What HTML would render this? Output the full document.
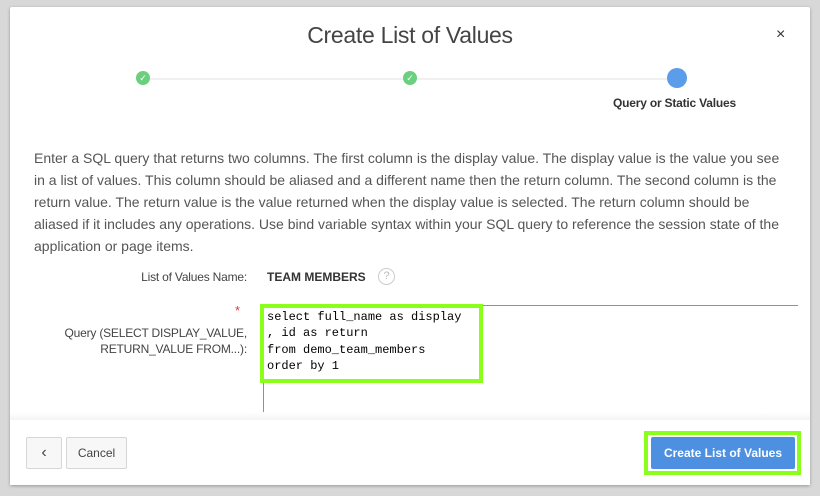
<!DOCTYPE html>
<html><head><style>
*{margin:0;padding:0;box-sizing:border-box}
body{width:820px;height:496px;background:#d8d8d8;font-family:"Liberation Sans",sans-serif;position:relative;overflow:hidden}
.dlg{position:absolute;left:10px;top:7px;width:800px;height:478px;background:#fff;border-radius:2px;box-shadow:0 1px 3px rgba(0,0,0,.3)}
.title{position:absolute;left:0;width:820px;top:22px;text-align:center;font-size:23px;color:#444;letter-spacing:-0.3px}
.x{position:absolute;left:776px;top:26px;font-size:16px;color:#333}
.line{position:absolute;top:78px;height:2px;background:#f0f0f0}
.dot{position:absolute;width:14px;height:14px;border-radius:50%;background:#6ccf7f;top:71px;color:#fff;font-size:9px;text-align:center;line-height:14px}
.blue{position:absolute;left:667px;top:68px;width:20px;height:20px;border-radius:50%;background:#5b9de8}
.step{position:absolute;left:613px;top:96px;font-size:12px;font-weight:bold;color:#333;letter-spacing:-0.2px}
.desc{position:absolute;left:34px;top:147px;width:760px;font-size:14px;line-height:22px;color:#555}
.lbl{position:absolute;font-size:12px;color:#444;text-align:right;letter-spacing:-0.2px}
.code{position:absolute;left:267px;top:309px;font-family:"Liberation Mono",monospace;font-size:12px;line-height:16.3px;color:#000}
.gbox{position:absolute;border:4px solid #8aff1c}
.footer{position:absolute;left:10px;top:420px;width:800px;height:65px;background:#fff}
.btn{position:absolute;border:1px solid #d6d6d6;border-radius:2px;background:#f7f7f7;color:#444;font-size:12px;text-align:center}
</style></head><body>
<div class="dlg"></div>
<div class="title">Create List of Values</div>
<div class="x">×</div>
<div class="line" style="left:150px;width:520px"></div>
<div class="dot" style="left:136px">✓</div>
<div class="dot" style="left:403px">✓</div>
<div class="blue"></div>
<div class="step">Query or Static Values</div>
<div class="desc">Enter a SQL query that returns two columns. The first column is the display value. The display value is the value you see in a list of values. This column should be aliased and a different name then the return column. The second column is the return value. The return value is the value returned when the display value is selected. The return column should be aliased if it includes any operations. Use bind variable syntax within your SQL query to reference the session state of the application or page items.</div>
<div class="lbl" style="left:60px;width:187px;top:270px">List of Values Name:</div>
<div style="position:absolute;left:267px;top:270px;font-size:12px;font-weight:bold;color:#333">TEAM MEMBERS</div>
<div style="position:absolute;left:378px;top:268px;width:17px;height:17px;border:1px solid #ccc;border-radius:50%;font-size:11px;color:#bbb;text-align:center;line-height:15px">?</div>
<div style="position:absolute;left:235px;top:303px;color:#e33;font-size:13px">*</div>
<div class="lbl" style="left:40px;width:207px;top:325px;line-height:16px">Query (SELECT DISPLAY_VALUE,<br>RETURN_VALUE FROM...):</div>
<div style="position:absolute;left:263px;top:305px;width:535px;height:1px;background:#5b9de8"></div>
<div style="position:absolute;left:263px;top:305px;width:1px;height:115px;background:#5b9de8"></div>
<div class="code">select full_name as display<br>, id as return<br>from demo_team_members<br>order by 1</div>
<div class="gbox" style="left:260px;top:304px;width:223px;height:79px"></div>
<div class="footer"></div>
<div style="position:absolute;left:10px;top:412px;width:800px;height:8px;background:linear-gradient(#fff,#f4f4f4)"></div>
<div class="btn" style="left:26px;top:437px;width:36px;height:32px;line-height:30px;font-size:16px">‹</div>
<div class="btn" style="left:66px;top:437px;width:61px;height:32px;line-height:30px">Cancel</div>
<div class="gbox" style="left:644px;top:431px;width:157px;height:44px"></div>
<div style="position:absolute;left:651px;top:437px;width:144px;height:32px;background:#4d8fe0;border-radius:2px;color:#fff;font-size:12px;font-weight:bold;text-align:center;line-height:32px">Create List of Values</div>
</body></html>
